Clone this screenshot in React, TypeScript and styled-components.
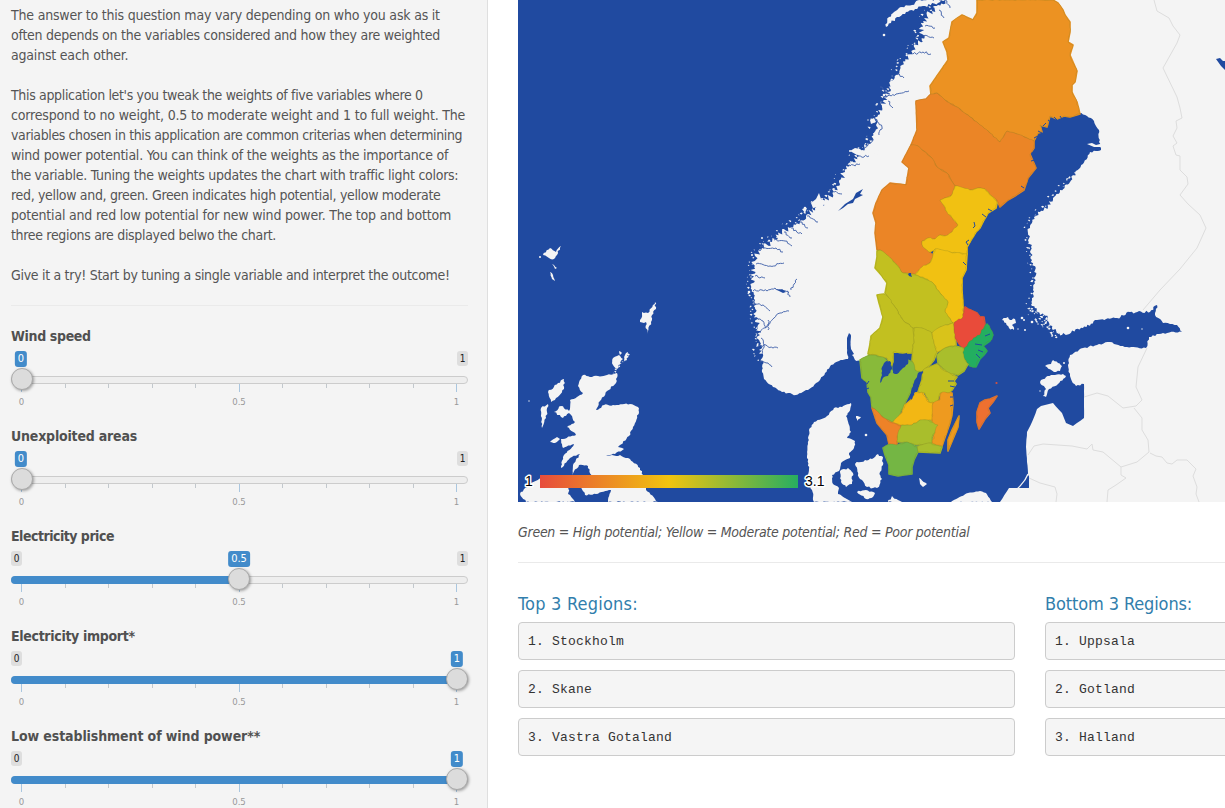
import React from 'react';
import styled, { createGlobalStyle } from 'styled-components';

const GlobalStyle = createGlobalStyle`
  * { box-sizing: border-box; }
  body { margin: 0; background: #fff; color: #555; overflow: hidden;
    font: 14px/20px 'DejaVu Sans Condensed', 'DejaVu Sans', sans-serif; font-stretch: condensed; }
`;

const Page = styled.div`display: flex; width: 1225px; height: 808px; overflow: hidden;`;
const Sidebar = styled.aside`
  flex: 0 0 488px; padding: 5px 19px 0 11px; background: #f4f4f4;
  border-right: 1px solid #dfdfdf;
`;
const Paragraph = styled.p`margin: 0 0 20px;`;
const Line = styled.span<{ $track: number }>`
  display: block; white-space: nowrap; letter-spacing: ${p => p.$track}px;
`;
const Rule = styled.hr<{ $gap?: string }>`
  height: 1px; border: 0; margin: ${p => p.$gap ?? '0'}; background: #eaeaea;
`;

const Control = styled.section`height: 100px; color: #505050;`;
const ControlLabel = styled.div<{ $track: number }>`
  font-weight: 700; letter-spacing: ${p => p.$track}px; white-space: nowrap; margin-bottom: 5px;
`;
const BadgeRow = styled.div`
  position: relative; display: flex; justify-content: space-between; height: 25px;
`;
const Badge = styled.span<{ $hidden?: boolean }>`
  width: 11px; height: 15px; border-radius: 3px; background: #dedede; color: #222;
  font-size: 10px; line-height: 15px; text-align: center;
  visibility: ${p => (p.$hidden ? 'hidden' : 'visible')};
`;
const Bubble = styled.span`
  position: absolute; top: 0; transform: translateX(-50%);
  padding: 0 3px; height: 16px; border-radius: 3px; background: #428bca; color: #fff;
  font-size: 11px; line-height: 16px;
`;
const Track = styled.div`
  position: relative; height: 8px; border: 1px solid #ccc; border-radius: 8px; background: #eee;
`;
const Fill = styled.div`height: 8px; margin: -1px; border-radius: 8px 0 0 8px; background: #428bca;`;
const Handle = styled.div`
  position: absolute; top: -9px; width: 22px; height: 22px; border-radius: 50%;
  background: #dcdcdc; border: 1px solid #aaa; box-shadow: 1px 1px 3px rgba(0,0,0,.35);
`;
const Ticks = styled.div`display: flex; justify-content: space-between; margin: 0 11px 0 10px; height: 10px;`;
const Tick = styled.i<{ $major: boolean }>`
  width: 1px; height: ${p => (p.$major ? 8 : 4)}px; background: ${p => (p.$major ? '#a9c6df' : '#c2c8cd')};
`;
const Scale = styled.div`
  display: flex; justify-content: space-between; margin: 0 7px 0 6px; color: #999;
  font-size: 9.5px; line-height: 16px;
`;
const ScaleMark = styled.span`flex: 0 0 9px; display: flex; justify-content: center;`;

type Setting = { name: string; value: number; track: number };
const settings: Setting[] = [
  { name: 'Wind speed', value: 0, track: -0.35 },
  { name: 'Unexploited areas', value: 0, track: -0.2 },
  { name: 'Electricity price', value: 0.5, track: -0.5 },
  { name: 'Electricity import*', value: 1, track: -0.32 },
  { name: 'Low establishment of wind power**', value: 1, track: -0.1 },
];

function Slider({ name, value, track }: Setting) {
  const at = 10.5 + value * 435;
  return (
    <Control>
      <ControlLabel $track={track}>{name}</ControlLabel>
      <BadgeRow>
        <Badge $hidden={value === 0}>0</Badge>
        <Badge $hidden={value === 1}>1</Badge>
        <Bubble style={{ left: value === 1 ? at + 0.5 : Math.floor(at) }}>{value}</Bubble>
      </BadgeRow>
      <Track>
        {value > 0 && <Fill style={{ width: at }} />}
        <Handle style={{ left: value === 0.5 ? 216 : Math.floor(at) - 11 }} />
      </Track>
      <Ticks>{Array.from({ length: 11 }, (_, i) => <Tick key={i} $major={i % 5 === 0} />)}</Ticks>
      <Scale><ScaleMark>0</ScaleMark><ScaleMark>0.5</ScaleMark><ScaleMark>1</ScaleMark></Scale>
    </Control>
  );
}

const Main = styled.main`flex: 1; min-width: 0; padding-left: 30px;`;
const MapView = styled.svg`display: block; width: 707px; height: 502px; background: #204aa0;`;
const LegendText = styled.text`
  font: 14px 'Liberation Sans', Arial, sans-serif; fill: #000;
  stroke: #fff; stroke-width: 3px; paint-order: stroke; stroke-linejoin: round;
`;
const Caption = styled.p`
  margin: 20px 0; white-space: nowrap; letter-spacing: -0.27px; font-style: italic;
`;
const Lists = styled.div`display: grid; grid-template-columns: 497px 497px; gap: 30px;`;
const List = styled.section``;
const ListTitle = styled.h4<{ $track: number }>`
  margin: 0 0 8px; font-size: 18px; line-height: 20px; font-weight: 400; color: #317eac;
  letter-spacing: ${p => p.$track}px;
`;
const Entry = styled.pre`
  margin: 0 0 10px; height: 38px; padding: 1px 9px 0; border: 1px solid #ccc; border-radius: 4px;
  background: #f5f5f5; color: #333; line-height: 36px; letter-spacing: .2px;
  font-size: 13px; font-family: 'Liberation Mono', 'Courier New', monospace;
`;

type Pt = [number, number];
const parse = (s: string): Pt[] => s.trim().split(/\s+/).map(p => p.split(',').map(Number) as Pt);
const random = (seed: number) => {
  let r = seed;
  return () => { r = (r * 16807) % 2147483647; return r / 2147483647; };
};

/* Subdivides every edge and displaces the new points, for an indented coast. */
function coast(s: string, amp: number, step = 2.5, seed = 7, closed = true) {
  const pts = parse(s);
  const rnd = random(seed);
  const out: string[] = [];
  const n = closed ? pts.length : pts.length - 1;
  for (let i = 0; i < n; i++) {
    const [x1, y1] = pts[i];
    const [x2, y2] = pts[(i + 1) % pts.length];
    const len = Math.hypot(x2 - x1, y2 - y1);
    const k = Math.max(1, Math.round(len / step));
    out.push(`${x1},${y1}`);
    for (let j = 1; j < k; j++) {
      const d = (rnd() - 0.5) * 2 * amp;
      out.push(`${(x1 + ((x2 - x1) * j) / k - ((y2 - y1) / len) * d).toFixed(1)},${(y1 + ((y2 - y1) * j) / k + ((x2 - x1) / len) * d).toFixed(1)}`);
    }
  }
  if (!closed) out.push(pts[pts.length - 1].join(','));
  return `M${out.join('L')}${closed ? 'Z' : ''}`;
}

/* Skerries: small blots scattered on the sea side of a coast line. */
function skerries(s: string, reach: number, every: number, seed: number) {
  const pts = parse(s);
  const rnd = random(seed);
  let d = '';
  for (let i = 0; i < pts.length - 1; i++) {
    const [x1, y1] = pts[i];
    const [x2, y2] = pts[i + 1];
    const len = Math.hypot(x2 - x1, y2 - y1);
    for (let t = rnd() * every; t < len; t += every * (0.5 + rnd())) {
      const o = reach * rnd();
      const x = x1 + ((x2 - x1) * t) / len - ((y2 - y1) / len) * o;
      const y = y1 + ((y2 - y1) * t) / len + ((x2 - x1) / len) * o;
      const r = 0.5 + rnd() * 1.1;
      d += `M${(x - r).toFixed(1)},${y.toFixed(1)}l${(r * 1.1).toFixed(1)},${(-r * rnd() * 1.6).toFixed(1)} ${r.toFixed(1)},${(r * 0.5).toFixed(1)} ${(-r * 0.7).toFixed(1)},${r.toFixed(1)}z`;
    }
  }
  return d;
}

const norwayCoast = '945,0 938,5 932,11 927,16 921,27 922,34 924,39 918,43 913,50 908,57 902,65 896,75 890,85 888,92 884,100 882,107 878,115 876,125 876,133 871,143 862,150 857,157 850,165 845,172 839,182 834,192 825,201 815,208 806,216 800,222 790,228 782,232 772,242 762,248 755,256 753,264 752,278 752,290 755,300 756,312 758,325 760,335 759,350 763,361';
const norwaySouth = '763,361 762,372 764,379 773,387 782,392 796,395 808,390 818,382 825,373 831,365 839,361 848,359 847,347 849,335 851,336 850,350 855,360 860,361 867,363';
const bothnianNorth = '1079,113 1087,116 1094,121 1099,130 1099,142 1101,150 1096,151 1090,152 1083,164 1075,173';
const archipelago = '1075,173 1070,182 1060,190 1053,198 1048,207 1040,212 1034,217 1030,226 1028,233 1031,247 1032,260 1036,275 1033,290 1031,305 1038,312 1048,318 1052,328 1062,335';
const finlandSouth = '1062,335 1083,328 1097,320 1117,318 1130,312 1150,312 1157,305';
const estonia = '1157,305 1155,315 1163,323 1177,325 1182,332 1163,333 1149,337 1146,348 1127,347 1110,342 1097,345 1083,348 1070,355 1068,365 1070,376 1071,379 1076,386 1084,384';
const latvia = '1084,384 1084,418 1073,426 1066,423 1062,413 1053,403 1041,406 1037,409 1032,422 1027,432 1026,447 1028,473 1029,488 1009,488 1000,502';

const islands: { d: string; amp: number }[] = [
  { d: '886,27 889,17 894,12 902,7 912,5 920,0 945,0 938,3 925,6 915,9 905,14 897,17 891,23', amp: 1.4 },
  { d: '543,255 550,248 556,252 561,246 557,255 554,259 549,258', amp: 1 },
  { d: '552,264 557,268 555,269', amp: .5 }, { d: '550,272 553,275 555,281 552,279', amp: .5 },
  { d: '655,302 656,309 652,315 651,322 647,334 646,322 640,322 642,312 648,313', amp: 1 },
  { d: '613,365 613,358 619,355 623,359 620,364 617,369', amp: 1 },
  { d: '619,351 622,353 620,355', amp: .4 }, { d: '625,355 628,352 627,358 623,363', amp: .7 },
  { d: '583,375 590,377 598,376 607,375 617,373 616,383 607,391 600,401 596,410 604,405 613,405 630,404 638,407 639,412 633,427 629,436 618,447 624,449 615,454 606,456 620,455 630,459 640,468 643,475 646,490 658,502 608,502 611,490 596,494 585,495 581,487 592,477 588,466 579,465 572,475 573,465 580,454 570,458 561,468 563,457 574,444 563,448 561,439 576,435 567,427 575,422 569,413 563,418 554,412 561,406 569,411 570,400 577,397 583,393 578,386', amp: .8 },
  { d: '520,494 531,483 541,478 560,478 569,487 568,494 575,502 526,502', amp: .8 },
  { d: '548,392 558,383 564,379 564,389 556,398 551,402', amp: 1 },
  { d: '541,408 548,404 547,412 546,418 542,428', amp: .8 },
  { d: '550,442 557,437 560,439 555,443', amp: .4 },
  { d: '851,403 849,412 846,416 851,432 847,438 855,441 854,448 849,453 850,458 841,463 839,471 832,475 833,484 839,488 838,494 845,498 852,502 814,502 812,490 808,483 809,469 807,456 808,444 809,430 814,422 827,416 834,408 842,407', amp: .7 },
  { d: '840,471 848,468 853,473 852,484 846,487 841,482', amp: .9 },
  { d: '855,464 865,460 872,459 878,454 883,457 883,465 880,472 882,479 877,488 867,487 860,479', amp: 1.2 },
  { d: '857,492 866,490 875,493 873,497 866,499', amp: .8 },
  { d: '856,416 861,417 857,421', amp: .4 }, { d: '919,478 927,484 923,487 920,484', amp: .4 },
  { d: '888,502 892,496 898,500 902,502', amp: .9 },
  { d: '951,502 958,498 968,493 980,491 986,493 992,502', amp: .3 },
  { d: '1045,366 1051,364 1053,360 1058,363 1062,366 1060,371 1054,372', amp: .6 },
  { d: '1040,382 1046,377 1053,375 1063,374 1066,376 1058,384 1049,389 1046,397 1043,396 1046,389', amp: .8 },
  { d: '1002,320 1008,317 1010,320 1015,319 1016,323 1012,325 1014,330 1009,328 1006,323', amp: 1 },
];

const specks = '529,401 540,257 884,35 868,120 872,121 805,208 804,209 850,151 749,292 751,277 752,255 884,95 886,91 1024,320 1022,318 1018,329 1025,330 1032,322 1038,324 1036,320 1128,328 1142,329 1064,363 866,435 1040,391 762,238';
const fjords = [
  '753,291 762,290 767,291 775,288 782,291 788,292', '791,290 794,284 797,279', '787,291 790,297',
  '760,333 767,326 774,318 780,313 789,311', '758,347 766,345 773,348 778,348', '760,362 768,363 772,367',
  '752,304 763,305 770,311', '755,318 763,321 766,328', '760,247 776,248 783,252', '774,240 785,241 792,246',
  '791,228 802,234', '756,264 770,266 784,263', '857,157 869,156', '864,150 873,139', '875,119 882,127 879,135',
  '883,98 896,94 909,91', '888,101 893,108', '913,54 923,52 931,54', '923,36 934,38', '925,26 935,28',
  '939,10 944,18', '880,87 890,94', '807,216 818,222', '800,222 808,228', '755,276 765,278', '784,232 792,238',
  '761,338 764,345 762,354', '768,320 768,330', '850,166 860,164', '834,192 842,194', '945,0 950,8', '897,74 904,78',
];

const regions: { c: string; d: string; a?: number }[] = [
  { c: '#ec9222', d: '977,0 977,13 973,20 962,15 952,22 949,38 943,42 947,52 948,60 930,86 931,95 937,93 945,100 957,107 970,117 978,123 990,133 1000,142 1007,131 1017,134 1027,138 1034,141 1038,133 1042,132 1040,125 1047,127 1050,116 1057,119 1064,116 1070,117 1080,114 1077,102 1072,92 1072,85 1075,82 1077,71 1070,55 1073,45 1068,42 1070,32 1070,22 1065,15 1063,10 1058,3 1053,0' },
  { c: '#eb8526', d: '916,101 926,99 931,94 937,93 945,100 957,107 970,117 978,123 990,133 1000,142 1007,131 1017,134 1027,138 1034,141 1034,148 1030,154 1036,168 1028,178 1024,190 1015,196 1008,200 1000,207 997,200 993,197 985,189 978,188 970,190 955,186 953,183 947,173 937,167 932,158 922,150 918,146 911,145 917,130' },
  { c: '#eb8526', d: '911,145 918,146 922,150 932,158 937,167 947,173 953,183 955,186 951,196 940,200 947,212 958,225 952,232 945,236 940,235 935,239 928,238 922,241 923,247 933,255 930,263 922,267 915,274 903,273 895,263 887,255 880,250 877,250 875,233 876,223 873,213 876,203 882,190 890,183 906,185 909,168 902,162' },
  { c: '#f1c112', a: .8, d: '955,186 970,190 978,188 985,189 993,197 997,203 996,208 988,213 984,220 980,228 976,232 971,240 967,247 967,254 950,252 935,249 929,252 923,247 922,241 928,238 935,239 940,235 945,236 952,232 958,225 947,212 940,200 951,196' },
  { c: '#f1c112', a: .8, d: '935,249 950,252 967,254 966,270 962,278 962,290 963,305 963,317 960,320 953,323 945,312 948,302 940,293 932,282 923,277 915,275 922,267 930,263 933,255' },
  { c: '#c2c020', d: '877,251 880,250 887,255 895,263 903,273 915,275 923,278 932,282 940,293 948,302 945,312 953,323 940,327 932,333 922,328 913,328 903,320 895,307 889,298 885,293 887,283 882,276 875,268 877,257' },
  { c: '#c2c020', d: '877,295 884,294 889,298 895,307 903,320 913,328 914,340 912,353 903,353 893,352 893,367 887,358 877,355 868,354 870,344 871,336 880,328 883,317 879,303' },
  { c: '#c2c020', d: '914,328 922,328 932,333 934,343 937,352 934,360 930,365 920,373 915,370 912,360 914,340' },
  { c: '#d9c31a', d: '932,333 940,327 953,323 955,332 956,345 947,347 937,352 934,343' },
  { c: '#e94b3a', a: .8, d: '965,307 968,309 977,313 980,317 984,317 985,324 980,335 970,341 965,349 960,345 955,337 954,327 955,322 963,317' },
  { c: '#23ae60', a: 1.4, d: '987,324 990,329 993,335 990,341 983,346 987,351 984,355 980,359 976,367 970,366 967,363 963,357 964,350 970,341 980,335 985,326' },
  { c: '#a9be2c', d: '937,355 945,348 955,346 963,348 964,357 968,364 964,371 958,375 947,372 938,363' },
  { c: '#88ba3a', a: .7, d: '860,360 870,355 883,357 893,367 898,369 907,360 913,362 915,370 922,372 913,383 910,393 905,403 898,417 892,422 880,415 872,407 871,397 868,392 867,382 862,378' },
  { c: '#c2c020', a: .8, d: '923,370 930,367 937,364 943,370 957,377 954,381 956,384 952,390 948,393 940,393 937,402 930,403 925,393 918,392 922,380' },
  { c: '#f2b714', d: '893,422 902,413 905,405 911,400 915,393 922,392 928,402 933,403 932,420 920,420 912,425 900,425' },
  { c: '#ee9a1f', a: .7, d: '933,403 940,400 941,393 945,392 952,393 953,403 952,415 950,423 942,446 932,443 935,433 932,423' },
  { c: '#ee9a1f', d: '959,416 958,427 953,439 948,451 948,440 952,430' },
  { c: '#a9be2c', d: '900,426 912,425 920,420 928,420 938,425 932,437 932,443 917,445 907,442 897,442 897,432' },
  { c: '#ee8228', d: '872,408 877,411 882,417 890,422 901,426 897,437 897,446 889,444 887,435 877,423' },
  { c: '#a9be2c', d: '917,447 928,443 942,447 940,453 918,452' },
  { c: '#74b644', d: '883,448 890,444 897,445 907,442 917,447 918,452 914,460 912,467 912,474 904,475 898,476 889,474 889,465 885,455' },
  { c: '#ee7030', d: '977,412 980,403 985,400 990,399 997,396 993,402 988,408 990,413 985,419 979,429 977,422' },
];

const lakes = [
  '896,353 901,355 907,353 908,364 903,368 897,374 893,373 893,364 896,360',
  '885,362 890,361 892,369 888,376 884,377 880,383 882,375 882,367',
  '923,371 919,382 914,395 911,400 911,392 914,383 918,373',
  '908,274 911,273 912,277 909,276',
];

const borders = 'M1154,0L1157,11 1169,18 1173,26 1180,35 1177,43 1163,68 1177,97 1180,108 1182,118 1176,121 1177,128 1173,136 1177,143 1173,146 1176,155 1180,156 1180,170 1187,177 1188,184 1180,195 1188,204 1200,215 1206,228 1197,248 1180,269 1160,290 1143,310'
  + 'M1147,348L1138,367 1136,387 1142,400 1136,406 1123,408 1108,396 1097,393 1084,397'
  + 'M1134,408L1142,418 1142,430 1148,440 1149,452 1137,462 1121,467 1103,452 1093,450 1092,444 1087,449 1072,446 1043,444 1034,446 1028,455'
  + 'M1121,467L1121,475 1126,478 1116,485 1108,490 1107,502 M1029,478L1040,483 1055,487 1057,494 1056,502'
  + 'M1150,453L1156,456 1162,457 1167,463 1172,464 1177,460 1187,460 1196,469 1193,476 1197,487 1196,494 1199,502';

function SwedenMap() {
  const east = [
    coast(bothnianNorth, 0.8, 2, 19, false),
    coast(archipelago, 1.7, 1.7, 29, false).slice(1),
    coast(finlandSouth, 1.5, 1.8, 37, false).slice(1),
    coast(estonia, 0.9, 2.2, 43, false).slice(1),
    coast(latvia, 0.15, 4, 3, false).slice(1),
    '1225,502L1225,0L1040,0Z',
  ].join('L');
  return (
    <MapView viewBox="518 0 707 502" role="img" aria-label="Wind power potential by region">
      <defs>
        <linearGradient id="scale">
          <stop offset="0" stopColor="#e74c3c" />
          <stop offset=".5" stopColor="#f1c40f" />
          <stop offset="1" stopColor="#27ae60" />
        </linearGradient>
      </defs>
      <g fill="#f4f4f4">
        <path d={`${coast(norwayCoast, 3.2, 1.6, 31, false)}L${coast(norwaySouth, 0.8, 2, 5, false).slice(1)}L869,352L882,334L892,305L893,270L885,220L915,180L960,70L1000,20L1000,0Z`} />
        <path d={east} />
        <path d={skerries(norwayCoast, 7, 3.4, 41)} />
        <path d={skerries(archipelago, 5, 4, 23)} />
        <path d={skerries('1031,305 1038,312 1048,318 1052,328 1062,335', 9, 1.6, 57)} />
        <path d={skerries('612,372 630,352', 3, 3, 12)} />
        {islands.map((i, n) => <path key={n} d={coast(i.d, i.amp, 2, n + 11)} />)}
        {parse(specks).map(([x, y], i) => <circle key={i} cx={x} cy={y} r={0.7 + (i % 3) * 0.3} />)}
        <path d="M867,150l5,-2 6,3 3,-1 -3,5 -6,-2 -4,1z M870,120l4,-2 2,4 -5,2z M811,203l5,-4 3,-6 2,6 5,2 -3,5 -6,1 -4,1z M802,209l5,-1 -2,5z M850,151l5,-3 5,1 5,4 -8,2z M1087,144l5,-1 4,2 4,-1 2,3 -8,0z" />
      </g>
      <path d={fjords.map((f, n) => coast(f, 1.1, 1.8, n + 5, false)).join('')} fill="none" stroke="#3c5ea8" strokeWidth=".9" strokeLinejoin="bevel" />
      <path d="M838,211l7,-7 8,-5 3,-6 7,-4 -3,5 3,1 -8,4 -2,4 -5,1 -5,4z M847,338l2,-5 2,2 -1,5 1,9 3,5 -4,2 -3,-7z M775,289l5,1 2,-1 4,3 -3,1z" fill="#204aa0" />
      <path d="M1216,59l4,-1 3,3 2,0v9l-4,-4z M1029,475v12h-9z" fill="#204aa0" />
      <path d="M1028,474C1023,487 1010,494 1002,502" fill="none" stroke="#f4f4f4" strokeWidth="1.3" />
      <path d={borders} fill="none" stroke="#ddd" />
      {regions.map((r, n) => <path key={n} d={`M${r.d.split(' ').join('L')}Z`} fill={r.c} stroke={r.c} strokeWidth="1.6" strokeLinejoin="round" />)}
      <g stroke="#7a7b20" strokeOpacity=".4" strokeWidth=".6" strokeLinejoin="round">
        {regions.map((r, n) => <path key={n} d={coast(r.d, r.a ?? 0.6, 2.5, 77)} fill={r.c} />)}
      </g>
      <circle cx="996.5" cy="383" r="1.1" fill="#d7523d" />
      {lakes.map((d, n) => <path key={n} d={coast(d, 0.6, 2, n + 3)} fill="#204aa0" />)}
      <g stroke="#204aa0" fill="none" strokeWidth="1">
        <path d="M1034,138l4,-2M1038,131l4,2M1043,126l3,-3M1048,120l4,3M1054,117l3,3M1060,116l2,3M1031,153l4,1M1031,161l4,-1M1024,188l-3,-2M992,211l-4,-2M986,217l-4,-3M974,222l1,4 -2,2M969,240l-3,2 2,3M963,262l3,3" />
        <path d="M862,383l5,1 2,-3M864,390l5,-2 M954,381l-6,0M955,387l-5,-1M953,397l-3,0M953,405l-3,1M982,345l-7,-1M983,352l-5,-2M980,358l-4,-4M990,334l-5,2" />
      </g>
      <rect x="540" y="475" width="258" height="13" fill="url(#scale)" />
      <LegendText x="525" y="486">1</LegendText>
      <LegendText x="805" y="486">3.1</LegendText>
    </MapView>
  );
}

const intro: [string, number][][] = [
  [
    ['The answer to this question may vary depending on who you ask as it', -0.2],
    ['often depends on the variables considered and how they are weighted', -0.25],
    ['against each other.', -0.2],
  ],
  [
    ["This application let's you tweak the weights of five variables where 0", -0.34],
    ['correspond to no weight, 0.5 to moderate weight and 1 to full weight. The', -0.18],
    ['variables chosen in this application are common criterias when determining', -0.38],
    ['wind power potential. You can think of the weights as the importance of', -0.23],
    ['the variable. Tuning the weights updates the chart with traffic light colors:', -0.27],
    ['red, yellow and, green. Green indicates high potential, yellow moderate', -0.33],
    ['potential and red low potential for new wind power. The top and bottom', -0.2],
    ['three regions are displayed belwo the chart.', -0.32],
  ],
  [['Give it a try! Start by tuning a single variable and interpret the outcome!', -0.3]],
];

const rankings = [
  { title: 'Top 3 Regions:', track: 0.22, items: ['Stockholm', 'Skane', 'Vastra Gotaland'] },
  { title: 'Bottom 3 Regions:', track: -0.12, items: ['Uppsala', 'Gotland', 'Halland'] },
];

export default function App() {
  return (
    <Page>
      <GlobalStyle />
      <Sidebar>
        {intro.map((lines, i) => (
          <Paragraph key={i}>{lines.map(([t, k]) => <Line key={t} $track={k}>{t}</Line>)}</Paragraph>
        ))}
        <Rule $gap="0 0 20px" />
        {settings.map(s => <Slider key={s.name} {...s} />)}
      </Sidebar>
      <Main>
        <SwedenMap />
        <Caption>Green = High potential; Yellow = Moderate potential; Red = Poor potential</Caption>
        <Rule $gap="0 0 31px" />
        <Lists>
          {rankings.map(r => (
            <List key={r.title}>
              <ListTitle $track={r.track}>{r.title}</ListTitle>
              {r.items.map((t, i) => <Entry key={t}>{`${i + 1}. ${t}`}</Entry>)}
            </List>
          ))}
        </Lists>
      </Main>
    </Page>
  );
}
